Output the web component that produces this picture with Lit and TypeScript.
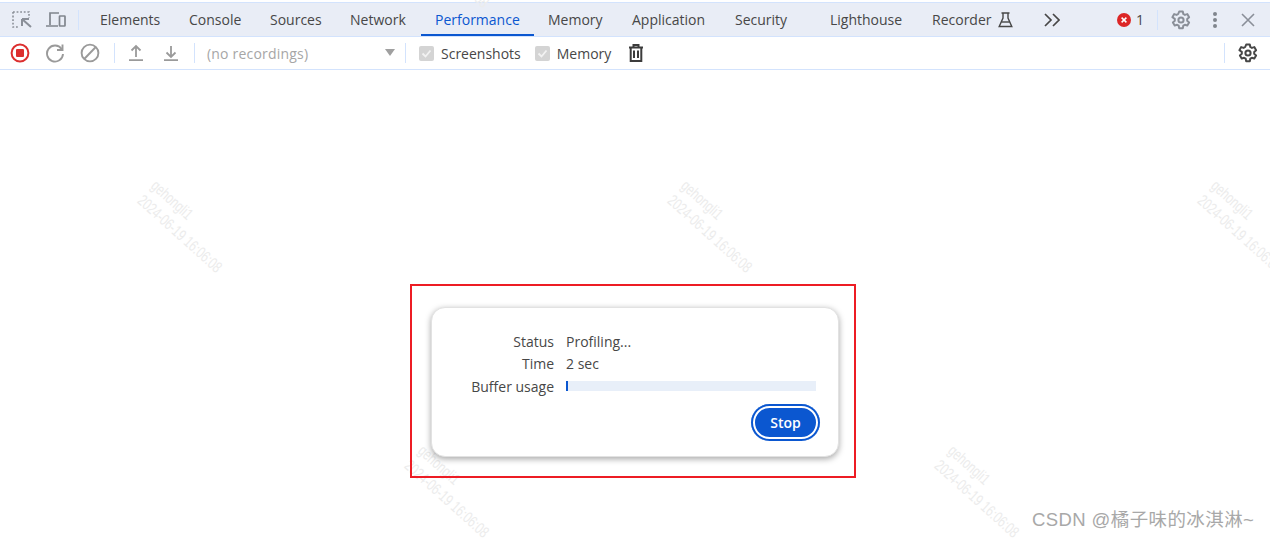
import { LitElement, html, css } from "lit";
import { customElement } from "lit/decorators.js";
import { map } from "lit/directives/map.js";
import { classMap } from "lit/directives/class-map.js";
import { styleMap } from "lit/directives/style-map.js";

const TABS = [
  { name: "Elements", width: 89 },
  { name: "Console", width: 81 },
  { name: "Sources", width: 80 },
  { name: "Network", width: 85 },
  { name: "Performance", width: 113, active: true },
  { name: "Memory", width: 84 },
  { name: "Application", width: 103 },
  { name: "Security", width: 95 },
  { name: "Lighthouse", width: 102 },
  { name: "Recorder", width: 60 },
];

const WATERMARKS = [
  { x: 160, y: 176 },
  { x: 690, y: 176 },
  { x: 1220, y: 176 },
  { x: 427, y: 441 },
  { x: 957, y: 441 },
  { x: 427, y: -89 },
];

const gear = (color: string) => html`<svg width="22" height="22" viewBox="0 0 22 22" fill="none" stroke=${color} stroke-width="2" stroke-linejoin="round">
  <path d="M9.2 2.5h3.6l.5 2.5 1.6.9 2.4-.8 1.8 3.1-1.9 1.7v1.9l1.9 1.7-1.8 3.1-2.4-.8-1.6.9-.5 2.5H9.2l-.5-2.5-1.6-.9-2.4.8-1.8-3.1 1.9-1.7v-1.9L2.4 8.2l1.8-3.1 2.4.8 1.6-.9z" />
  <circle cx="11" cy="11" r="2.6" />
</svg>`;

@customElement("app-root")
export class AppRoot extends LitElement {
  static styles = css`
    :host {
      display: block;
      position: relative;
      width: 1270px;
      height: 538px;
      overflow: hidden;
      background: #fff;
      font-family: "Open Sans", "Noto Sans", sans-serif;
      font-size: 14px;
      color: #474747;
    }

    .tabbar {
      display: flex;
      align-items: center;
      height: 33px;
      margin-top: 2px;
      background: #e9edf6;
      border-top: 1px solid #d3e3fd;
      border-bottom: 1px solid #d3e3fd;
    }

    .tabbar-icons {
      display: flex;
      align-items: center;
      gap: 12px;
      width: 78px;
      padding-left: 11px;
      box-sizing: border-box;
      height: 100%;
    }

    .sep {
      width: 1px;
      height: 20px;
      background: #d3e3fd;
      flex: none;
    }

    .tabs {
      display: flex;
      height: 100%;
      padding-left: 7px;
    }

    .tab {
      position: relative;
      display: flex;
      align-items: center;
      box-sizing: border-box;
      padding-left: 14px;
      white-space: nowrap;
    }

    .tab.active {
      color: #0b57d0;
      box-shadow: inset 0 -2px 0 #0b57d0;
    }

    .flask {
      margin: 0 31px 0 20px;
      flex: none;
    }

    .errors {
      display: flex;
      align-items: center;
      gap: 5px;
      margin-left: 57px;
      width: 40px;
      flex: none;
    }

    .tabbar-end {
      display: flex;
      align-items: center;
      height: 100%;
    }

    .tabbar-gear {
      display: flex;
      margin: 0 12px;
    }

    .dots {
      margin-left: 9px;
    }

    .close {
      margin-left: 24px;
    }

    .toolbar {
      display: flex;
      align-items: center;
      height: 32px;
      padding-left: 2px;
      border-bottom: 1px solid #d3e3fd;
    }

    .tool {
      display: flex;
      justify-content: center;
      align-items: center;
      width: 35px;
      flex: none;
    }

    .sep-history {
      margin: 0 3px 0 7px;
    }

    .sep-file {
      margin-left: 6px;
    }

    .sep-select {
      margin-right: 13px;
    }

    .rec-select {
      display: flex;
      align-items: center;
      justify-content: space-between;
      width: 210px;
      padding: 0 10px 0 12px;
      box-sizing: border-box;
      color: #a6a6a6;
      letter-spacing: 0.2px;
    }

    .caret {
      width: 0;
      height: 0;
      border-left: 5px solid transparent;
      border-right: 5px solid transparent;
      border-top: 7px solid #a0a0a0;
      margin-top: -2px;
    }

    .check {
      display: flex;
      align-items: center;
      gap: 7px;
    }

    .check + .check {
      margin-left: 14px;
    }

    .box {
      display: flex;
      width: 15px;
      height: 15px;
      background: #d4d4d4;
      border-radius: 2px;
    }

    .trash {
      margin-left: 7px;
    }

    .spacer {
      flex: 1;
    }

    .tool-end {
      width: 45px;
    }

    .main {
      position: relative;
      display: flex;
      padding: 214px 0 0 410px;
    }

    .frame {
      box-sizing: border-box;
      width: 446px;
      height: 194px;
      padding: 21px 15px 0 19px;
      border: 2px solid #ed1c24;
    }

    .card {
      box-sizing: border-box;
      height: 150px;
      padding: 22px 0 0;
      background: #fff;
      border: 1px solid #e2e2e2;
      border-radius: 14px;
      box-shadow: 0 2px 6px rgba(0, 0, 0, 0.35);
    }

    .rows {
      display: grid;
      grid-template-columns: 122px 250px;
      column-gap: 12px;
      grid-auto-rows: 22.5px;
      align-items: center;
    }

    .label {
      text-align: right;
    }

    .bar {
      height: 10px;
      background: #e8eff9;
    }

    .bar-fill {
      height: 100%;
      background: #0b57d0;
    }

    .actions {
      display: flex;
      justify-content: flex-end;
      padding: 6.5px 18px 0 0;
    }

    .stop {
      box-sizing: border-box;
      width: 69px;
      height: 37px;
      padding: 0;
      border: 0;
      border-radius: 19px;
      background: #0b57d0;
      box-shadow: inset 0 0 0 2px #0b57d0, inset 0 0 0 4px #fff;
      color: #fff;
      font: 600 14px "Open Sans", sans-serif;
    }

    .wm {
      position: absolute;
      font: 16px/20px "Liberation Sans", sans-serif;
      color: #ececec;
      white-space: nowrap;
      transform-origin: 0 0;
      transform: rotate(42deg) scaleX(0.72);
      pointer-events: none;
    }

    .csdn {
      position: absolute;
      left: 1032px;
      top: 508px;
      font: 18.5px/24px "Liberation Sans", "Noto Sans CJK SC", sans-serif;
      letter-spacing: 0.4px;
      color: #a8a8a8;
      white-space: nowrap;
    }
  `;

  render() {
    return html`
      ${map(
        WATERMARKS,
        (w) => html`<div
          class="wm"
          style=${styleMap({ left: `${w.x}px`, top: `${w.y}px` })}
        >
          gehongli1<br />2024-06-19 16:06:08
        </div>`,
      )}
      <div class="tabbar">
        <div class="tabbar-icons">
          <svg width="22" height="20" viewBox="0 0 22 20" fill="none" stroke="#8a8f98" stroke-width="1.6">
            <path d="M2 2h16v6M2 2v15h6" stroke-dasharray="1.8 1.8" />
            <path d="M20 17L11 9M11 9v7M11 9h7" stroke-width="2" />
          </svg>
          <svg width="22" height="20" viewBox="0 0 22 20" fill="none" stroke="#80858d" stroke-width="1.7">
            <path d="M5 15V3h9M1 16h12" />
            <rect x="14.5" y="6" width="5.5" height="10" rx="0.5" />
          </svg>
        </div>
        <div class="sep"></div>
        <div class="tabs">
          ${map(
            TABS,
            (t) => html`<div
              class=${classMap({ tab: true, active: !!t.active })}
              style=${styleMap({ width: `${t.width}px` })}
            >
              ${t.name}
            </div>`,
          )}
        </div>
        <svg class="flask" width="15" height="16" viewBox="0 0 15 16" fill="none" stroke="#474747" stroke-width="1.4">
          <path d="M3.5 1h8M5 1v5L1.2 14.5h12.6L10 6V1" />
          <path d="M3.4 10h8.2" />
        </svg>
        <svg width="16" height="14" viewBox="0 0 16 14" fill="none" stroke="#474747" stroke-width="1.7">
          <path d="M1 1l6 6-6 6M9 1l6 6-6 6" />
        </svg>
        <div class="errors">
          <svg width="14" height="14" viewBox="0 0 14 14">
            <circle cx="7" cy="7" r="7" fill="#dc2626" />
            <path d="M4.6 4.6l4.8 4.8M9.4 4.6l-4.8 4.8" stroke="#fff" stroke-width="1.5" />
          </svg>
          <span>1</span>
        </div>
        <div class="tabbar-end">
          <div class="sep"></div>
          <span class="tabbar-gear">${gear("#8a8f98")}</span>
          <svg class="dots" width="4" height="16" viewBox="0 0 4 16" fill="#80858d">
            <circle cx="2" cy="2" r="2" /><circle cx="2" cy="8" r="2" /><circle cx="2" cy="14" r="2" />
          </svg>
          <svg class="close" width="14" height="14" viewBox="0 0 14 14" stroke="#8a8f98" stroke-width="1.6">
            <path d="M1 1l12 12M13 1L1 13" />
          </svg>
        </div>
      </div>

      <div class="toolbar">
        <span class="tool">
          <svg width="20" height="20" viewBox="0 0 20 20" fill="none">
            <circle cx="10" cy="10" r="8.4" stroke="#dc2f2f" stroke-width="2" />
            <rect x="6" y="6" width="8" height="8" rx="1" fill="#dc2f2f" />
          </svg>
        </span>
        <span class="tool">
          <svg width="20" height="20" viewBox="0 0 20 20" fill="none" stroke="#9a9a9a" stroke-width="1.9">
            <path d="M16.6 6A8 8 0 1 0 18 11" />
            <path d="M17.5 1.5v5.5H12" />
          </svg>
        </span>
        <span class="tool">
          <svg width="20" height="20" viewBox="0 0 20 20" fill="none" stroke="#9a9a9a" stroke-width="1.9">
            <circle cx="10" cy="10" r="8.4" />
            <path d="M4.2 16L15.8 4" />
          </svg>
        </span>
        <div class="sep sep-history"></div>
        <span class="tool">
          <svg width="18" height="18" viewBox="0 0 18 18" fill="none" stroke="#9a9a9a" stroke-width="1.8">
            <path d="M9 13V2M4.5 6.5L9 2l4.5 4.5M2 16.2h14" />
          </svg>
        </span>
        <span class="tool">
          <svg width="18" height="18" viewBox="0 0 18 18" fill="none" stroke="#9a9a9a" stroke-width="1.8">
            <path d="M9 2v11M4.5 8.5L9 13l4.5-4.5M2 16.2h14" />
          </svg>
        </span>
        <div class="sep sep-file"></div>
        <div class="rec-select">
          <span>(no recordings)</span>
          <span class="caret"></span>
        </div>
        <div class="sep sep-select"></div>
        <label class="check">
          <span class="box">${this.tick()}</span>
          <span>Screenshots</span>
        </label>
        <label class="check">
          <span class="box">${this.tick()}</span>
          <span>Memory</span>
        </label>
        <span class="tool trash">
          <svg width="16" height="18" viewBox="0 0 16 18" fill="none" stroke="#3c3c3c" stroke-width="2">
            <path d="M1 3.5h14M5.5 3.5V1h5v2.5M2.7 3.5V17h10.6V3.5M6 6.5V14M10 6.5V14" />
          </svg>
        </span>
        <div class="spacer"></div>
        <div class="sep"></div>
        <span class="tool tool-end">${gear("#474747")}</span>
      </div>

      <div class="main">
        <div class="frame">
          <div class="card">
            <div class="rows">
              <div class="label">Status</div>
              <div>Profiling...</div>
              <div class="label">Time</div>
              <div>2 sec</div>
              <div class="label">Buffer usage</div>
              <div class="bar">
                <div class="bar-fill" style=${styleMap({ width: "2px" })}></div>
              </div>
            </div>
            <div class="actions">
              <button class="stop">Stop</button>
            </div>
          </div>
        </div>
      </div>

      <div class="csdn">CSDN @橘子味的冰淇淋~</div>
    `;
  }

  tick() {
    return html`<svg width="15" height="15" viewBox="0 0 15 15" fill="none" stroke="#f2f2f2" stroke-width="1.8">
      <path d="M3.5 7.5l3 3 5-6" />
    </svg>`;
  }
}
